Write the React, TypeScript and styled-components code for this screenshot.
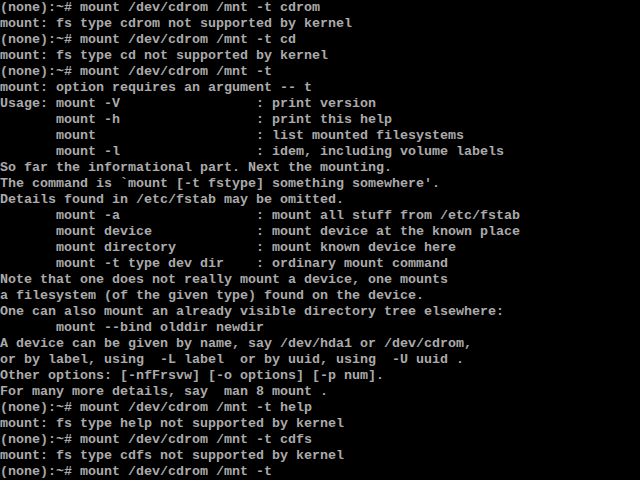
import React from "react";
import styled, { createGlobalStyle } from "styled-components";

const Global = createGlobalStyle`
  html, body { margin: 0; padding: 0; background: #000; }
`;

const Screen = styled.div`
  width: 640px;
  height: 480px;
  background: #000;
  color: #aaaaaa;
  overflow: hidden;
  display: flex;
  flex-direction: column;
`;

const Line = styled.pre`
  margin: 0;
  height: 16px;
  line-height: 16px;
  font-family: "Liberation Mono", "DejaVu Sans Mono", monospace;
  font-size: 13.333px;
  font-weight: bold;
  white-space: pre;
  color: inherit;
`;

const lines = [
  "(none):~# mount /dev/cdrom /mnt -t cdrom",
  "mount: fs type cdrom not supported by kernel",
  "(none):~# mount /dev/cdrom /mnt -t cd",
  "mount: fs type cd not supported by kernel",
  "(none):~# mount /dev/cdrom /mnt -t",
  "mount: option requires an argument -- t",
  "Usage: mount -V                 : print version",
  "       mount -h                 : print this help",
  "       mount                    : list mounted filesystems",
  "       mount -l                 : idem, including volume labels",
  "So far the informational part. Next the mounting.",
  "The command is `mount [-t fstype] something somewhere'.",
  "Details found in /etc/fstab may be omitted.",
  "       mount -a                 : mount all stuff from /etc/fstab",
  "       mount device             : mount device at the known place",
  "       mount directory          : mount known device here",
  "       mount -t type dev dir    : ordinary mount command",
  "Note that one does not really mount a device, one mounts",
  "a filesystem (of the given type) found on the device.",
  "One can also mount an already visible directory tree elsewhere:",
  "       mount --bind olddir newdir",
  "A device can be given by name, say /dev/hda1 or /dev/cdrom,",
  "or by label, using  -L label  or by uuid, using  -U uuid .",
  "Other options: [-nfFrsvw] [-o options] [-p num].",
  "For many more details, say  man 8 mount .",
  "(none):~# mount /dev/cdrom /mnt -t help",
  "mount: fs type help not supported by kernel",
  "(none):~# mount /dev/cdrom /mnt -t cdfs",
  "mount: fs type cdfs not supported by kernel",
  "(none):~# mount /dev/cdrom /mnt -t",
];

export default function App() {
  return (
    <>
      <Global />
      <Screen>
        {lines.map((l, i) => (
          <Line key={i}>{l}</Line>
        ))}
      </Screen>
    </>
  );
}
